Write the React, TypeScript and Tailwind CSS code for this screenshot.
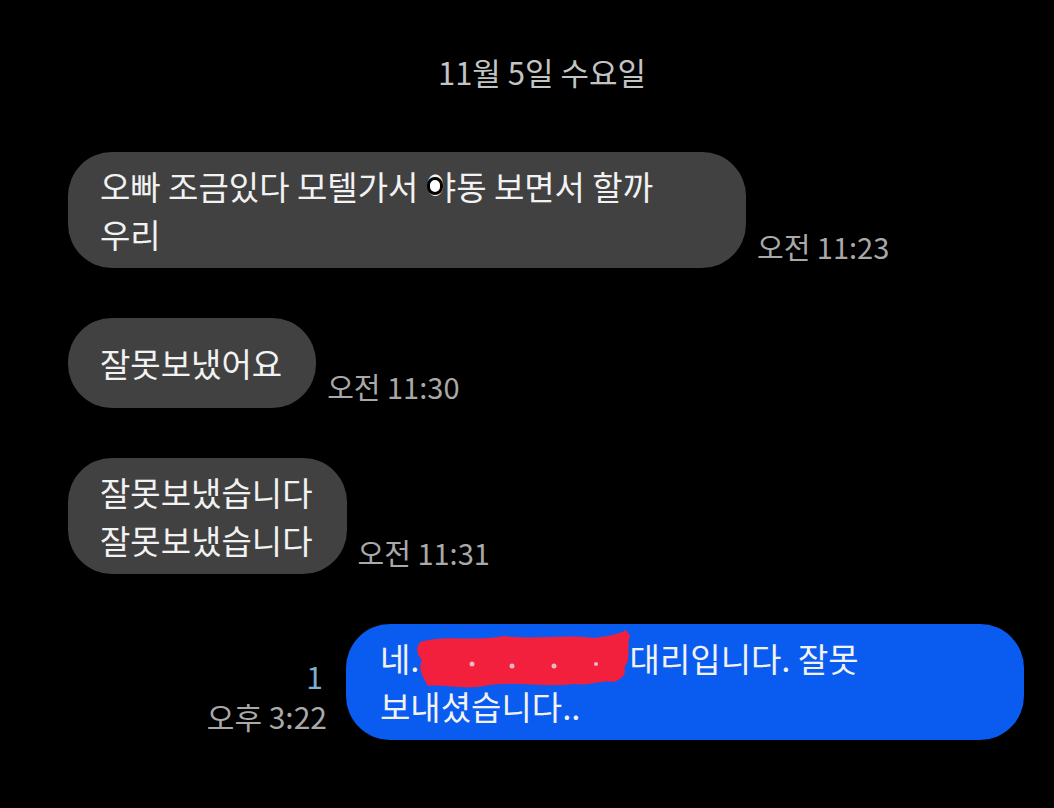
import React from 'react';

const font = { fontFamily: '"Noto Sans CJK KR", "Noto Sans", sans-serif' };

function Time({ children }: { children: React.ReactNode }) {
  return (
    <div className="ml-[11px] mb-[8px] shrink-0 text-[29px] leading-[28px] text-[#a9a9a9] whitespace-nowrap">
      {children}
    </div>
  );
}

function Incoming({ lines, time, dot, wide }: { lines: string[]; time: string; dot?: boolean; wide?: boolean }) {
  return (
    <div className="flex items-end">
      <div
        className={`relative ${wide ? 'w-[678px]' : ''} min-h-[90px] flex items-center rounded-[44px] bg-[#414141] pl-[32px] pr-[34px] py-[10px] text-[33px] leading-[48px] text-[#f2f2f2]`}
      >
        <div>
          {lines.map((l, i) => (
            <div key={i}>{l}</div>
          ))}
        </div>
        {dot && (
          <div className="absolute left-[359px] top-[25px] w-[16px] h-[18px] rounded-full bg-white border-[3px] border-black" />
        )}
      </div>
      <Time>{time}</Time>
    </div>
  );
}

export default function App() {
  return (
    <div style={font} className="w-[1054px] h-[808px] bg-black overflow-hidden">
      {/* date header */}
      <div className="pt-[52px] pl-[30px] text-center text-[31px] leading-[40px] text-[#c4c4c4]">11월 5일 수요일</div>

      <div className="mt-[60px] pl-[68px] pr-[30px] flex flex-col gap-[50px]">
        <Incoming lines={['오빠 조금있다 모텔가서 야동 보면서 할까', '우리']} time="오전 11:23" dot wide />
        <Incoming lines={['잘못보냈어요']} time="오전 11:30" />
        <Incoming lines={['잘못보냈습니다', '잘못보냈습니다']} time="오전 11:31" />

        {/* outgoing */}
        <div className="flex items-end justify-end">
          <div className="mr-[19px] mb-[4px] flex flex-col items-end text-[30px] leading-[40px]">
            <div className="text-[#7fb0cf] mr-[4px]">1</div>
            <div className="text-[#a9a9a9] whitespace-nowrap">오후 3:22</div>
          </div>
          <div className="relative w-[678px] rounded-[44px] bg-[#0a5cf0] pl-[34px] pr-[32px] py-[10px] text-[33px] leading-[48px] text-[#f2f2f2]">
            <div>
              네.<span className="inline-block w-[210px]" />대리입니다. 잘못
            </div>
            <div>보내셨습니다..</div>
            <svg className="absolute left-[68px] top-[4px]" width="220" height="64" viewBox="0 0 220 64">
              <path
                d="M6 14 C30 6 60 14 90 8 C120 12 150 6 180 10 C195 8 205 6 212 2 L216 8 C212 18 218 30 210 40 C214 46 206 52 200 54 C186 52 176 58 160 56 C130 60 100 52 70 58 C50 62 30 56 14 58 C8 48 4 40 8 32 C2 26 2 20 6 14 Z"
                fill="#f2203c"
              />
              <circle cx="58" cy="36" r="2.5" fill="#e8b8c4" />
              <circle cx="98" cy="38" r="2.5" fill="#e8b8c4" />
              <circle cx="140" cy="38" r="2.5" fill="#e8b8c4" />
              <circle cx="182" cy="36" r="2" fill="#e8b8c4" />
            </svg>
          </div>
        </div>
      </div>
    </div>
  );
}
